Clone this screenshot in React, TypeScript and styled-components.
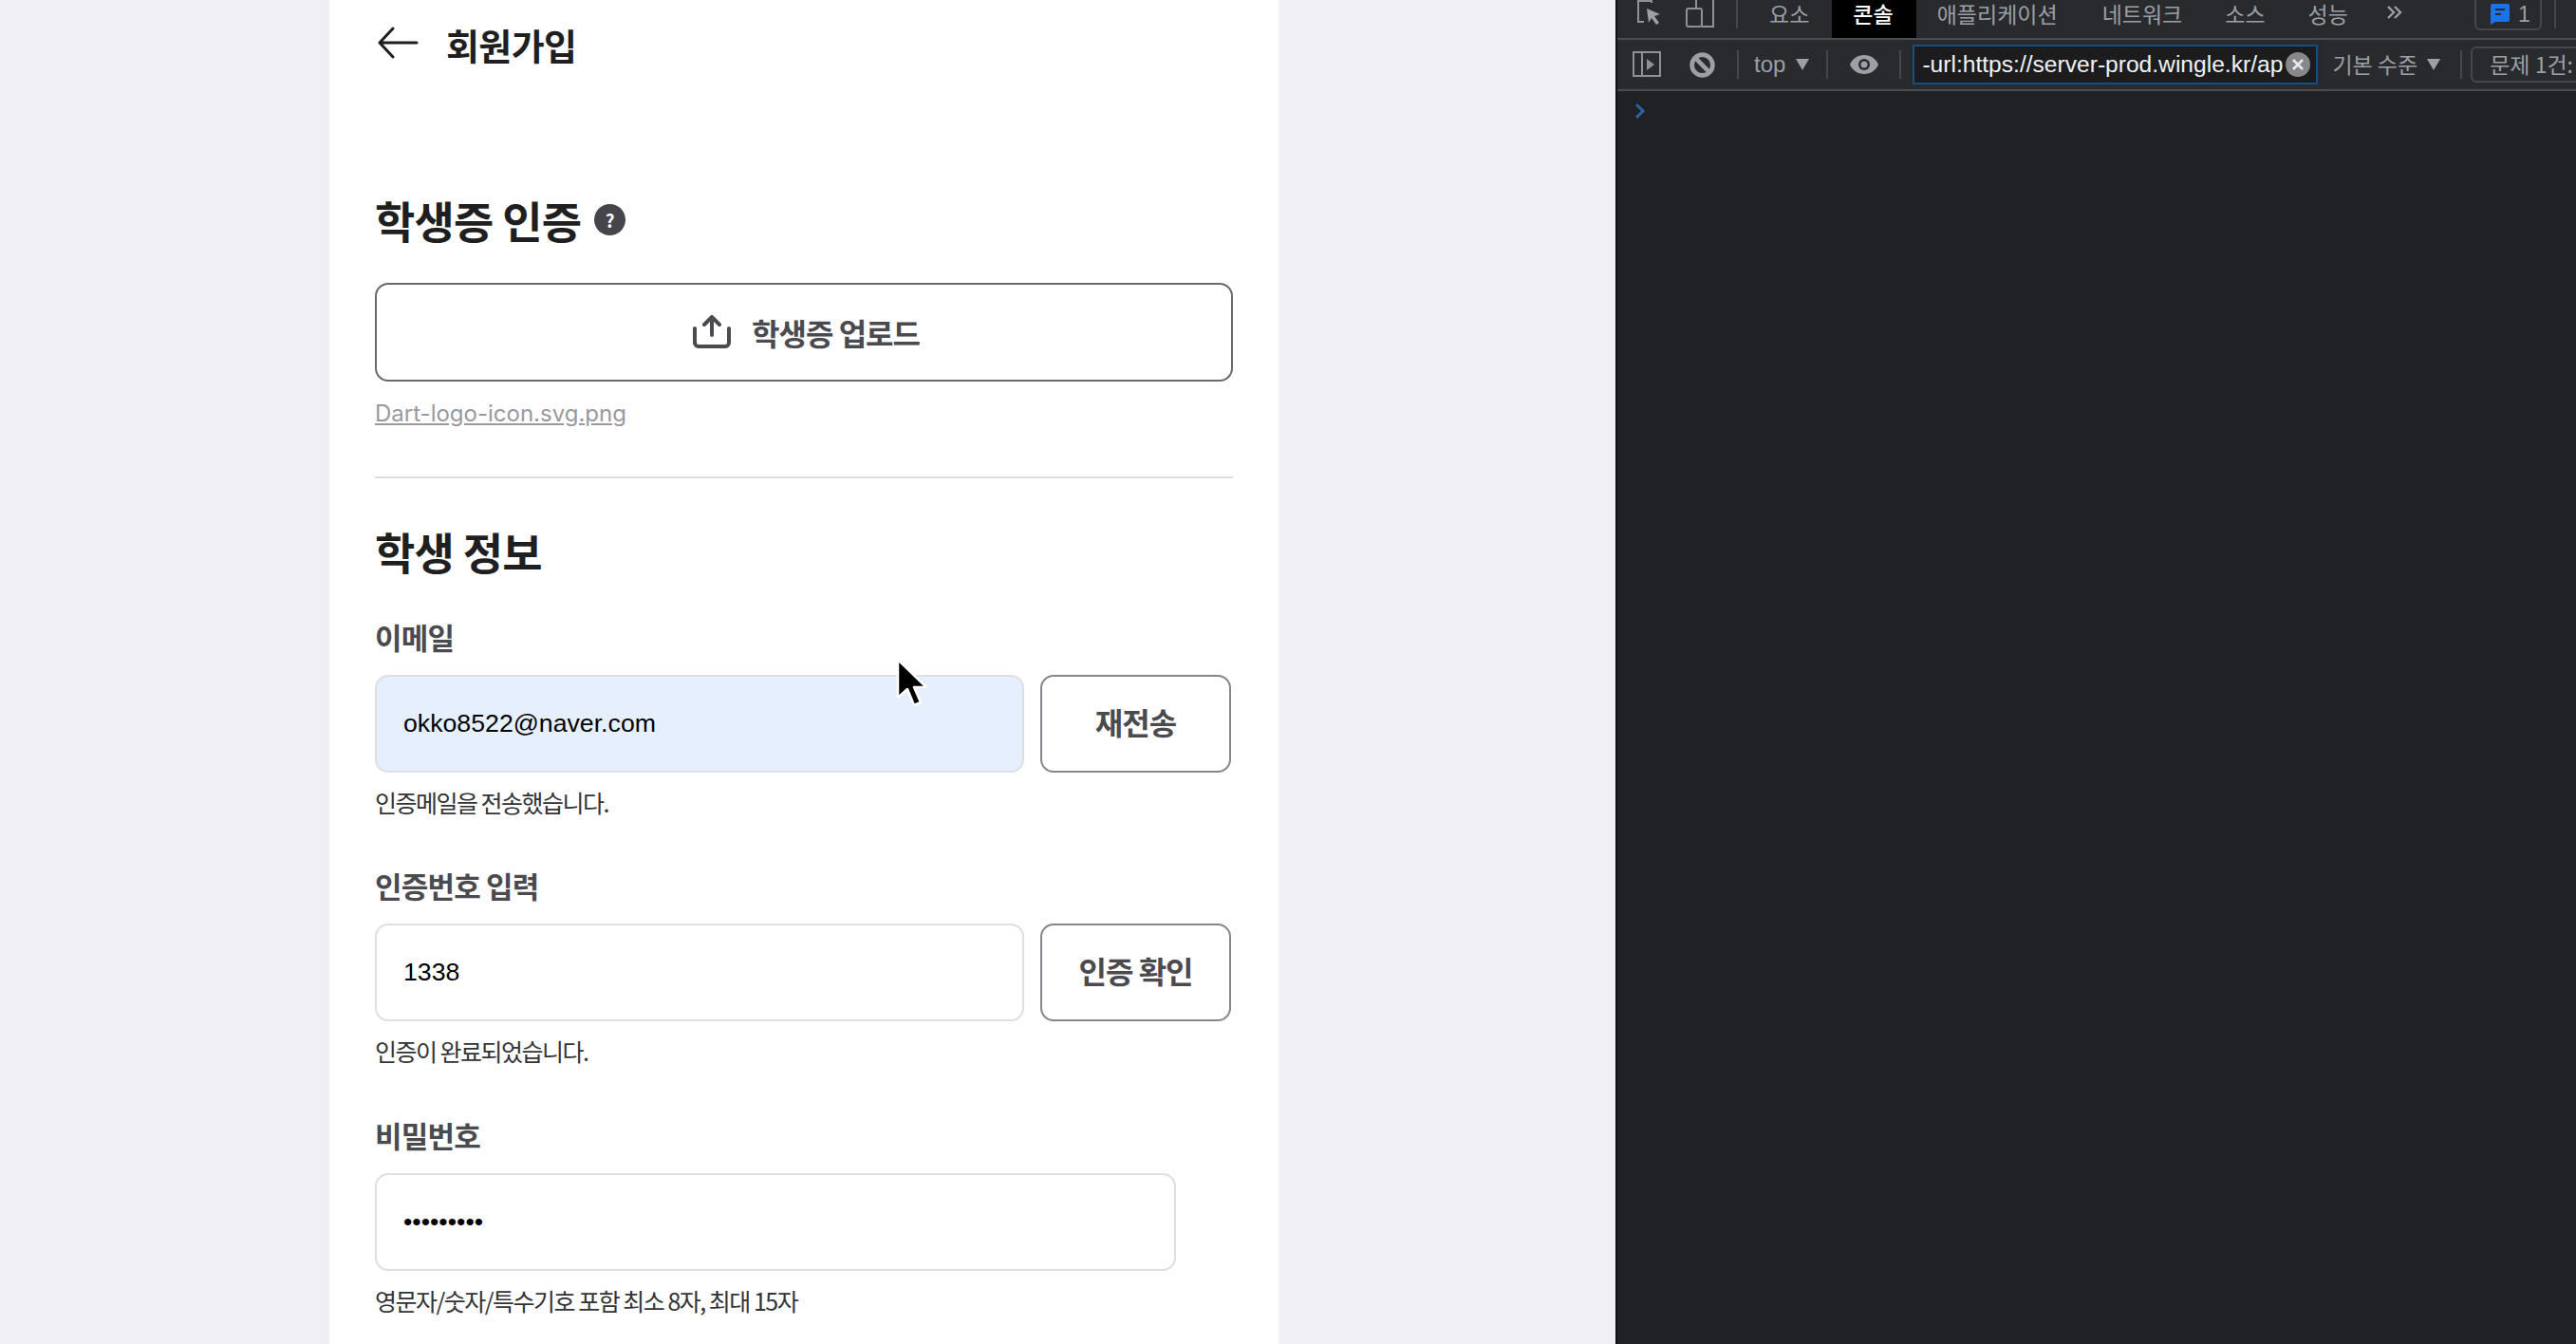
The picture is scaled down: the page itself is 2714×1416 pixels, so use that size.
import styled, { createGlobalStyle } from "styled-components";

const kr = `"Noto Sans CJK KR", "Liberation Sans", sans-serif`;
const latin = `"Liberation Sans", "Noto Sans CJK KR", sans-serif`;

const GlobalStyle = createGlobalStyle`
  html, body {
    margin: 0;
    height: 100%;
    overflow: hidden;
    background: #f0f0f4;
  }
  * { box-sizing: border-box; }
`;

const Screen = styled.div`
  display: flex;
  width: 2714px;
  height: 1416px;
  overflow: hidden;
  position: relative;
  font-family: ${kr};
`;

const PageArea = styled.div`
  width: 1702px;
  flex: none;
  padding-left: 347px;
  background: #f0f0f4;
`;

const Card = styled.main`
  width: 1000px;
  height: 1416px;
  background: #fff;
  padding: 0 48px 0 48px;
`;

const Header = styled.header`
  display: flex;
  align-items: center;
  gap: 29px;
  height: 92px;
  color: #1f1f22;
  svg {
    flex: none;
    margin: 0 0 3px 2px;
  }
`;

const PageTitle = styled.h1`
  margin: 0;
  font-size: 38px;
  font-weight: 700;
  letter-spacing: -0.6px;
  color: #1f1f22;
`;

const SectionTitle = styled.h2<{ $top: number }>`
  display: flex;
  align-items: center;
  gap: 14px;
  margin: ${p => p.$top}px 0 0;
  height: 60px;
  font-size: 46px;
  font-weight: 700;
  letter-spacing: -0.8px;
  color: #1f1f22;
`;

const HelpDot = styled.span`
  display: flex;
  align-items: center;
  justify-content: center;
  width: 33px;
  height: 33px;
  border-radius: 50%;
  background: #45454b;
  color: #fff;
  font-size: 19px;
  font-weight: 700;
  letter-spacing: 0;
`;

const UploadButton = styled.button`
  display: flex;
  align-items: center;
  justify-content: center;
  gap: 20px;
  width: 904px;
  height: 104px;
  margin-top: 37px;
  padding: 0 0 0 3px;
  background: #fff;
  border: 2px solid #69696e;
  border-radius: 14px;
  font-family: ${kr};
  font-size: 32px;
  font-weight: 700;
  letter-spacing: -1px;
  color: #4a4a4f;
`;

const FileLink = styled.a`
  display: block;
  margin-top: 19px;
  height: 30px;
  font-family: "Inter", ${kr};
  font-size: 24px;
  line-height: 30px;
  color: #99999e;
  text-decoration: underline;
`;

const Divider = styled.hr`
  width: 904px;
  height: 2px;
  margin: 51px 0 0;
  border: none;
  background: #dedee2;
`;

const Field = styled.section<{ $top: number }>`
  margin-top: ${p => p.$top}px;
`;

const Label = styled.label`
  display: block;
  height: 40px;
  font-size: 31px;
  line-height: 40px;
  font-weight: 700;
  letter-spacing: -0.8px;
  color: #4a4a4f;
`;

const Row = styled.div`
  display: flex;
  gap: 17px;
  margin-top: 20px;
`;

const TextInput = styled.input<{ $width: number; $filled?: boolean }>`
  width: ${p => p.$width}px;
  height: 103px;
  padding: 0 28px 0 28px;
  border: 2px solid #dfdfe3;
  border-radius: 14px;
  outline: none;
  background: ${p => (p.$filled ? "#e6effd" : "#fff")};
  font-family: ${latin};
  font-size: 26.7px;
  color: #000;
`;

const SideButton = styled.button`
  width: 201px;
  height: 103px;
  padding: 0 0 6px;
  background: #fff;
  border: 2px solid #87878b;
  border-radius: 14px;
  font-family: ${kr};
  font-size: 32px;
  font-weight: 700;
  letter-spacing: -1px;
  color: #4a4a4f;
`;

const Hint = styled.p`
  margin: 14px 0 0;
  height: 34px;
  font-size: 25px;
  line-height: 34px;
  letter-spacing: -1.5px;
  color: #333336;
`;

const Pointer = styled.svg`
  position: absolute;
  left: 941px;
  top: 692px;
`;

const DevTools = styled.aside`
  flex: 1;
  border-left: 2px solid #101012;
  background: #202124;
  font-family: ${latin};
`;

const TabBar = styled.div`
  display: flex;
  align-items: flex-start;
  height: 42px;
  background: #292a2d;
  border-bottom: 2px solid #494c50;
  overflow: hidden;
`;

const IconSlot = styled.span<{ $left: number }>`
  display: flex;
  flex: none;
  margin-left: ${p => p.$left}px;
`;

const VSep = styled.span<{ $left: number; $height: number }>`
  flex: none;
  width: 2px;
  height: ${p => p.$height}px;
  margin-left: ${p => p.$left}px;
  background: #45474b;
`;

const Tab = styled.span<{ $active?: boolean; $left: number; $padLeft: number; $padRight: number }>`
  flex: none;
  height: 40px;
  margin-left: ${p => p.$left}px;
  padding: 0 ${p => p.$padRight}px 0 ${p => p.$padLeft}px;
  background: ${p => (p.$active ? "#000" : "transparent")};
  color: ${p => (p.$active ? "#fff" : "#9aa0a6")};
  font-family: ${kr};
  font-size: 23px;
  font-weight: ${p => (p.$active ? 500 : 400)};
  line-height: 28px;
`;

const IssueBadge = styled.span`
  display: flex;
  align-items: center;
  gap: 8px;
  flex: none;
  width: 71px;
  height: 32px;
  margin-left: 75px;
  padding-left: 14px;
  border: 2px solid #45474b;
  border-top: none;
  border-radius: 0 0 6px 6px;
  color: #9aa0a6;
  font-size: 23px;
`;

const FilterBar = styled.div`
  display: flex;
  align-items: center;
  height: 54px;
  background: #292a2d;
  border-bottom: 2px solid #494c50;
  overflow: hidden;
  color: #9aa0a6;
`;

const ContextName = styled.span`
  flex: none;
  margin-left: 16px;
  font-size: 24px;
`;

const Caret = styled.span<{ $left: number }>`
  flex: none;
  width: 0;
  height: 0;
  margin-left: ${p => p.$left}px;
  border-left: 7px solid transparent;
  border-right: 7px solid transparent;
  border-top: 12px solid #9aa0a6;
`;

const FilterBox = styled.div`
  display: flex;
  align-items: center;
  flex: none;
  width: 427px;
  height: 42px;
  margin-left: 12px;
  padding: 0 6px 0 8px;
  border: 2px solid #15507f;
  background: #1c1c1e;
  color: #f1f3f4;
  font-size: 24.6px;
  white-space: nowrap;
`;

const FilterText = styled.span`
  flex: 1;
  overflow: hidden;
`;

const ClearDot = styled.span`
  flex: none;
  display: flex;
  align-items: center;
  justify-content: center;
  width: 26px;
  height: 26px;
  border-radius: 50%;
  background: #85878a;
`;

const LevelLabel = styled.span`
  flex: none;
  margin: 0 0 2px 15px;
  font-family: ${kr};
  font-size: 23px;
`;

const IssueFilter = styled.span`
  flex: none;
  height: 38px;
  margin-left: 9px;
  padding: 0 30px 0 18px;
  border: 2px solid #45474b;
  border-radius: 6px;
  font-family: ${kr};
  font-size: 23px;
  line-height: 32px;
  white-space: nowrap;
`;

const ConsolePrompt = styled.div`
  display: flex;
  padding: 11px 0 0 17px;
`;

export default function App() {
  return (
    <>
      <GlobalStyle />
      <Screen>
        <PageArea>
          <Card>
            <Header>
              <svg width="44" height="34" viewBox="0 0 44 34" fill="none" stroke="#1f1f22" strokeWidth="3" strokeLinecap="round" strokeLinejoin="round">
                <path d="M42 17H3M17 2L3 17l14 15" />
              </svg>
              <PageTitle>회원가입</PageTitle>
            </Header>

            <SectionTitle $top={109}>
              학생증 인증
              <HelpDot>?</HelpDot>
            </SectionTitle>

            <UploadButton>
              <svg width="44" height="36" viewBox="0 0 44 36" fill="none" stroke="#4a4a4f" strokeWidth="4" strokeLinecap="round" strokeLinejoin="round">
                <path d="M4 14v15a4 4 0 0 0 4 4h28a4 4 0 0 0 4-4V14" />
                <path d="M22 21V3M14 10l8-8 8 8" />
              </svg>
              학생증 업로드
            </UploadButton>

            <FileLink>Dart-logo-icon.svg.png</FileLink>
            <Divider />

            <SectionTitle $top={46}>학생 정보</SectionTitle>

            <Field $top={41}>
              <Label>이메일</Label>
              <Row>
                <TextInput $width={684} $filled readOnly value="okko8522@naver.com" />
                <SideButton>재전송</SideButton>
              </Row>
              <Hint>인증메일을 전송했습니다.</Hint>
            </Field>

            <Field $top={51}>
              <Label>인증번호 입력</Label>
              <Row>
                <TextInput $width={684} readOnly value="1338" />
                <SideButton>인증 확인</SideButton>
              </Row>
              <Hint>인증이 완료되었습니다.</Hint>
            </Field>

            <Field $top={52}>
              <Label>비밀번호</Label>
              <Row>
                <TextInput $width={844} type="password" readOnly value="123456789" />
              </Row>
              <Hint>영문자/숫자/특수기호 포함 최소 8자, 최대 15자</Hint>
            </Field>
          </Card>
        </PageArea>

        <DevTools>
          <TabBar>
            <IconSlot $left={20}>
              <svg width="26" height="28" viewBox="0 0 26 28" fill="none">
                <path d="M16 3V1H2v22h6" stroke="#8e9195" strokeWidth="2" />
                <path d="M11 9l14 6-6 2 5 7-3 2-5-7-3 5z" fill="#9aa0a6" />
              </svg>
            </IconSlot>
            <IconSlot $left={25}>
              <svg width="32" height="30" viewBox="0 0 32 30" fill="none" stroke="#8e9195" strokeWidth="2">
                <path d="M12 0v9M30 0v28H18" />
                <rect x="2" y="9" width="16" height="19" rx="2" />
              </svg>
            </IconSlot>
            <VSep $left={22} $height={30} />
            <Tab $left={0} $padLeft={33} $padRight={24}>요소</Tab>
            <Tab $active $left={0} $padLeft={22} $padRight={24}>콘솔</Tab>
            <Tab $left={22} $padLeft={0} $padRight={0}>애플리케이션</Tab>
            <Tab $left={47} $padLeft={0} $padRight={0}>네트워크</Tab>
            <Tab $left={45} $padLeft={0} $padRight={0}>소스</Tab>
            <Tab $left={45} $padLeft={0} $padRight={0}>성능</Tab>
            <IconSlot $left={40}>
              <svg width="18" height="26" viewBox="0 0 18 26" fill="none" stroke="#9aa0a6" strokeWidth="2.4">
                <path d="M2 7l6 6-6 6M9 7l6 6-6 6" />
              </svg>
            </IconSlot>
            <IssueBadge>
              <svg width="22" height="24" viewBox="0 0 22 24">
                <path d="M3 1h16a2 2 0 0 1 2 2v15a2 2 0 0 1-2 2H6l-5 3V3a2 2 0 0 1 2-2z" fill="#1a73e8" />
                <path d="M6 7h10M6 12h6" stroke="#292a2d" strokeWidth="2" />
              </svg>
              1
            </IssueBadge>
            <VSep $left={13} $height={30} />
          </TabBar>

          <FilterBar>
            <IconSlot $left={16}>
              <svg width="30" height="28" viewBox="0 0 30 28" fill="none" stroke="#8e9195" strokeWidth="2">
                <rect x="1" y="1" width="28" height="25" />
                <path d="M10 1v25" />
                <path d="M15 8l8 6-8 6z" fill="#8e9195" stroke="none" />
              </svg>
            </IconSlot>
            <IconSlot $left={30}>
              <svg width="27" height="27" viewBox="0 0 26 26" fill="none" stroke="#9aa0a6" strokeWidth="4.500">
                <circle cx="13" cy="13" r="10.500" />
                <path d="M5.500 5.500l15 15" />
              </svg>
            </IconSlot>
            <VSep $left={23} $height={30} />
            <ContextName>top</ContextName>
            <Caret $left={11} />
            <VSep $left={18} $height={30} />
            <IconSlot $left={22}>
              <svg width="32" height="22" viewBox="0 0 32 22">
                <path d="M16 1C9 1 3.500 5 1 11c2.500 6 8 10 15 10s12.500-4 15-10C28.500 5 23 1 16 1z" fill="#9aa0a6" />
                <circle cx="16" cy="11" r="6" fill="#292a2d" />
                <circle cx="16" cy="11" r="3.500" fill="#9aa0a6" />
              </svg>
            </IconSlot>
            <VSep $left={21} $height={30} />
            <FilterBox>
              <FilterText>-url:https://server-prod.wingle.kr/ap</FilterText>
              <ClearDot>
                <svg width="14" height="14" viewBox="0 0 14 14" stroke="#e8eaed" strokeWidth="2.600">
                  <path d="M2 2l10 10M12 2L2 12" />
                </svg>
              </ClearDot>
            </FilterBox>
            <LevelLabel>기본 수준</LevelLabel>
            <Caret $left={10} />
            <VSep $left={21} $height={30} />
            <IssueFilter>문제 1건:</IssueFilter>
          </FilterBar>

          <ConsolePrompt>
            <svg width="14" height="20" viewBox="0 0 14 20" fill="none" stroke="#2f5fa8" strokeWidth="3">
              <path d="M3 3l7 7-7 7" />
            </svg>
          </ConsolePrompt>
        </DevTools>

        <Pointer width="36" height="56" viewBox="0 0 36 56">
          <path d="M5 3v40l10-9 7 17 7-3-7-16h13z" fill="#000" stroke="#fff" strokeWidth="2.500" strokeLinejoin="round" />
        </Pointer>
      </Screen>
    </>
  );
}
